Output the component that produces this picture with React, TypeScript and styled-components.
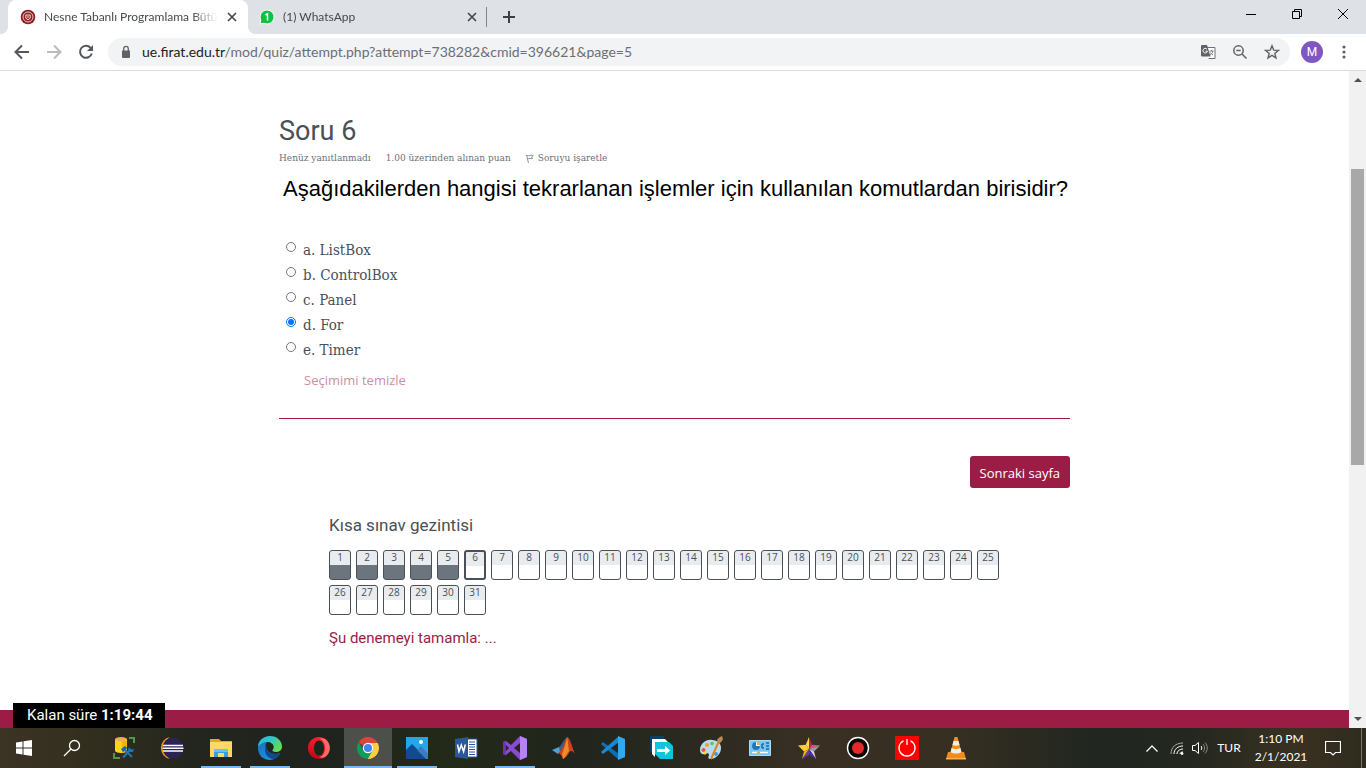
import React, { useState } from 'react';
import styled, { createGlobalStyle } from 'styled-components';

const ui = `"Open Sans", "Noto Sans", sans-serif`;
const slab = `"DejaVu Serif Condensed", "DejaVu Serif", "Liberation Serif", serif`;
const roboto = `Roboto, "Liberation Sans", sans-serif`;
const lato = `Lato, "Open Sans", sans-serif`;
const maroon = '#9b1d46';

const Global = createGlobalStyle`
  *, *::before, *::after { box-sizing: border-box; }
  body { margin: 0; background: #fff; }
  button { border: 0; padding: 0; background: none; font: inherit; color: inherit; cursor: pointer; }
  svg { display: block; flex: none; }
`;

const Screen = styled.div`
  display: flex;
  flex-direction: column;
  min-height: 100vh;
`;

/* ---------- browser chrome ---------- */

const TabStrip = styled.header`
  display: flex;
  height: 34px;
  padding-left: 8px;
  background: #dee1e6;
  font: 12px/16px ${lato};
  color: #45494d;
`;

const Tab = styled.div<{ $active?: boolean }>`
  position: relative;
  display: flex;
  align-items: center;
  gap: 8px;
  width: 240px;
  padding: 0 10px 0 ${(p) => (p.$active ? 12 : 11)}px;
  border-radius: 8px 8px 0 0;
  background: ${(p) => (p.$active ? '#fff' : 'transparent')};
  &::before, &::after {
    content: '';
    display: ${(p) => (p.$active ? 'block' : 'none')};
    position: absolute;
    bottom: 0;
    width: 8px;
    height: 8px;
  }
  &::before { left: -8px; background: radial-gradient(circle at 0 0, transparent 8px, #fff 8px); }
  &::after { right: -8px; background: radial-gradient(circle at 100% 0, transparent 8px, #fff 8px); }
`;

const TabTitle = styled.span`
  flex: 1;
  white-space: nowrap;
  mask-image: linear-gradient(to right, #000 85%, transparent);
`;

const TabDivider = styled.i`
  align-self: center;
  width: 1px;
  height: 20px;
  margin-left: -2px;
  background: #80868b;
`;

const NewTab = styled.button`
  display: grid;
  place-items: center;
  width: 28px;
  margin-left: 8px;
`;

const WindowButtons = styled.div`
  display: flex;
  margin-left: auto;
`;

const WindowButton = styled.button`
  display: grid;
  place-items: center;
  width: 46px;
  height: 28px;
`;

const Toolbar = styled.nav`
  display: flex;
  align-items: center;
  height: 37px;
  padding: 0 6px;
  border-bottom: 1px solid #dadce0;
  background: #fff;
`;

const ToolButton = styled.button`
  display: grid;
  place-items: center;
  width: 32px;
  height: 28px;
`;

const Omnibox = styled.div`
  flex: 1;
  display: flex;
  align-items: center;
  height: 28px;
  margin: 0 6px;
  padding: 0 2px 0 12px;
  border-radius: 14px;
  background: #f1f3f4;
`;

const Address = styled.a`
  flex: 1;
  margin-left: 10px;
  overflow: hidden;
  white-space: nowrap;
  font: 14px/20px ${lato};
  color: #6b6f74;
  text-decoration: none;
  b { font-weight: 400; color: #202124; }
`;

const Avatar = styled.button`
  && {
    width: 22px;
    height: 22px;
    margin: 0 5px;
    border-radius: 50%;
    background: #7e57c2;
    color: #fff;
    font: 12px/22px ${roboto};
  }
`;

/* ---------- page ---------- */

const Viewport = styled.div`
  position: relative;
  flex: 1;
  display: flex;
`;

const Page = styled.div`
  flex: 1;
  display: flex;
  flex-direction: column;
  background: #fff;
`;

const Main = styled.main`
  flex: 1;
  width: 100%;
  max-width: 791px;
  margin: 0 auto;
  padding: 44px 0 32px;
`;

const Title = styled.h1`
  margin: 0;
  font: 400 27px/32px ${roboto};
  color: #495057;
`;

const Meta = styled.div`
  display: flex;
  gap: 15px;
  margin-top: 3px;
  font: 10px/16px ${slab};
  color: #6a737b;
`;

const FlagLink = styled.a`
  display: flex;
  align-items: center;
  gap: 4px;
  color: inherit;
  text-decoration: none;
`;

const Question = styled.p`
  margin: 9px 0 35px;
  padding-left: 4px;
  font: 22px/28px "Liberation Sans", Arial, sans-serif;
  color: #000;
`;

const Answers = styled.form`
  display: flex;
  flex-direction: column;
  padding-left: 7px;
`;

const Answer = styled.label`
  display: flex;
  align-items: flex-start;
  gap: 7px;
  font: 15px/25px ${slab};
  color: #495057;
  input { width: 10px; height: 10px; margin: 4px 0 0; }
`;

const ClearLink = styled.a`
  align-self: flex-start;
  margin: 5px 0 0 18px;
  font: 13px/24px ${ui};
  color: #cd8ea3;
  text-decoration: none;
`;

const Divider = styled.hr`
  height: 1px;
  margin: 26px 0 37px;
  border: 0;
  background: ${maroon};
`;

const Submit = styled.div`
  display: flex;
  justify-content: flex-end;
`;

const NextButton = styled.button`
  && {
    height: 32px;
    padding: 2px 10px 0;
    border-radius: 3px;
    background: ${maroon};
    color: #fff;
    font: 13px/20px ${ui};
  }
`;

const QuizNav = styled.section`
  padding: 25px 50px 0;
`;

const NavTitle = styled.h2`
  margin: 0 0 13px;
  font: 400 17px/24px ${roboto};
  color: #495057;
`;

const NavGrid = styled.div`
  display: flex;
  flex-wrap: wrap;
  gap: 5px;
`;

const NavCell = styled.a<{ $answered: boolean; $current: boolean }>`
  width: 22px;
  height: 30px;
  border: ${(p) => (p.$current ? 2 : 1)}px solid #495057;
  border-radius: 3px;
  background: linear-gradient(#e9ecef 14px, ${(p) => (p.$answered ? '#6c757d' : '#fff')} 14px);
  font: 10px/${(p) => (p.$current ? 11 : 13)}px ${ui};
  color: #495057;
  text-align: center;
  text-decoration: none;
`;

const FinishLink = styled.a`
  display: inline-block;
  margin-top: 13px;
  font: 15px/20px ${roboto};
  color: ${maroon};
  text-decoration: none;
`;

const PageFooter = styled.footer`
  height: 18px;
  background: ${maroon};
`;

const Timer = styled.div`
  position: absolute;
  left: 13px;
  bottom: 0;
  padding: 0 12px 0 14px;
  background: #000;
  color: #fff;
  font: 15px/25px ${roboto};
`;

const ScrollTrack = styled.div`
  display: flex;
  flex-direction: column;
  align-items: center;
  justify-content: space-between;
  width: 17px;
  padding: 7px 0;
  background: #f1f1f1;
`;

const ScrollBody = styled.div`
  flex: 1;
  width: 13px;
  padding: 87px 0 0;
`;

const ScrollThumb = styled.div`
  height: 296px;
  background: #a8a8a8;
`;

/* ---------- taskbar ---------- */

const Taskbar = styled.footer`
  display: flex;
  height: 40px;
  background: linear-gradient(90deg, #3b3324 0, #35301f 5%, #23261e 14%, #1f231e 24%, #232a19 33%, #21251d 42%, #2a291f 50%, #393023 60%, #352f22 70%, #212620 80%, #232720 87%, #393121 95%, #2e2b1e 100%);
  color: #fff;
  font: 12px/18px ${lato};
`;

const TaskButton = styled.button<{ $state?: 'open' | 'active' }>`
  display: flex;
  flex-direction: column;
  align-items: center;
  width: 48px;
  height: 40px;
  && {
    padding-top: 8px;
    background: ${(p) => (p.$state === 'active' ? '#4d504a' : 'none')};
  }
  &::after {
    content: '';
    width: ${(p) => (p.$state === 'active' ? 48 : 40)}px;
    height: 2px;
    margin-top: auto;
    background: ${(p) => (p.$state ? '#76b9ed' : 'transparent')};
  }
`;

const Apps = styled.div`
  display: flex;
  gap: 1px;
  margin-left: 3px;
`;

const Tray = styled.div`
  display: flex;
  align-items: center;
  margin-left: auto;
`;

const TrayButton = styled.button<{ $w: number }>`
  display: grid;
  place-items: center;
  width: ${(p) => p.$w}px;
  height: 40px;
`;

const Clock = styled.time`
  width: 62px;
  margin: 0 1px 0 3px;
  text-align: center;
  white-space: nowrap;
  span { display: block; }
`;

const ShowDesktop = styled.button`
  width: 5px;
  height: 40px;
  margin-left: 8px;
  && { border-left: 1px solid #77746b; }
`;

const CloseIcon = () => (
  <svg width="12" height="12" viewBox="0 0 12 12"><path d="M2 2l8 8M10 2l-8 8" stroke="#45494d" strokeWidth="1.7" /></svg>
);

const I = ({ children }: { children: React.ReactNode }) => (
  <svg width="24" height="24" viewBox="0 0 24 24" fill="none">{children}</svg>
);

const apps: { name: string; state?: 'open' | 'active'; icon: React.ReactNode }[] = [
  { name: 'SQL Server Management Studio', icon: <I>
    <path d="M18 2h5v5M3 17v5h6" stroke="#4f9b45" strokeWidth="2" />
    <path d="M4 3v12c1 2.500 11 2.500 12 0V3z" fill="#ffd21c" /><path d="M11 5h5v10c-1 1-3 2-5 1.900z" fill="#f0b400" />
    <ellipse cx="10" cy="3.200" rx="6" ry="2.200" fill="#f5a95a" />
    <path d="M13 13l8 8M20 13l-8 8.500" stroke="#1878bd" strokeWidth="2" /><path d="M10 13l4-3 2 2-4 4z" fill="#1265a5" /><path d="M18 11l1 3 4-1-1 3h-4l-1-3z" fill="#1878bd" /></I> },
  { name: 'Eclipse', icon: <I>
    <path d="M10 1A11.200 11.200 0 0 0 10 23 13 13 0 0 1 10 1z" fill="#f7941e" />
    <circle cx="13" cy="12" r="10.500" fill="#2c2255" />
    <path d="M3 9.500h20M2.500 12.200h21M3 15h20" stroke="#fff" strokeWidth="1.500" /></I> },
  { name: 'File Explorer', state: 'open', icon: <I>
    <path d="M1 3h9l2 2h11v16H1z" fill="#e8a61c" /><path d="M1 6h22v15H1z" fill="#ffd867" />
    <path d="M5 21v-7l1-1h12l1 1v7h-4v-4H9v4z" fill="#3b9be4" /><path d="M5 14l1-1h12l1 1v2H5z" fill="#71bdf1" /></I> },
  { name: 'Microsoft Edge', state: 'open', icon: <I>
    <defs>
      <linearGradient id="eg" x1="0" y1="0" x2="1" y2="0.600"><stop stopColor="#2ab5e8" /><stop offset="0.500" stopColor="#30c6c6" /><stop offset="1" stopColor="#65dc50" /></linearGradient>
      <linearGradient id="eb" x1="0" y1="0" x2="0.600" y2="1"><stop stopColor="#1b6fc4" /><stop offset="1" stopColor="#1795dc" /></linearGradient>
    </defs>
    <path d="M0 12C1 6 6 5 9 6c-2 2-2 5 0 8 3 4 8 5 13 3-2 4-6 7-10 7C5 24 0 19 0 12z" fill="url(#eb)" />
    <path d="M8 9c-3 7 1 14 8 14 3-1 5-3 6-6-5 2-11 1-13-4-.6-1.500-.7-3-1-4z" fill="#104a8e" />
    <path d="M0 11C0 5 5 0 12 0s12 5 12 10.500c0 4-3 5.500-6 5.500-3 0-4-1.200-3.500-2 .5-.7 1.200-1.500 1.200-3 0-3-3-5-6.700-5C5 6 2 8 0 11z" fill="url(#eg)" />
    </I> },
  { name: 'Opera', icon: <I>
    <defs><linearGradient id="op" x1="0" y1="0" x2="0" y2="1"><stop stopColor="#ff1b2d" /><stop offset="1" stopColor="#b50c16" /></linearGradient></defs>
    <path fillRule="evenodd" d="M12 1C5.500 1 1 6 1 12s4.500 11 11 11 11-5 11-11S18.500 1 12 1zm0 3.500c3 0 5 3.500 5 7.500s-2 7.500-5 7.500S7 16 7 12s2-7.500 5-7.500z" fill="url(#op)" />
    <path d="M12 3c1.500-1 4-1.500 7 .7C24 8 24 16 19 20.300c-3 2.200-5.500 1.700-7 .7 3 0 6-4 6-9s-3-9-6-9z" fill="#fb6a68" /></I> },
  { name: 'Google Chrome', state: 'active', icon: <I>
    <path d="M12 12L2.500 6.500A11 11 0 0 1 21.500 6.500z" fill="#db4437" />
    <path d="M12 12V7h9.800A11 11 0 0 1 11.500 23l5-8.500z" fill="#ffcd40" />
    <path d="M12 12l4.400 2.500-4.900 8.500A11 11 0 0 1 2.500 6.500l5 8z" fill="#0f9d58" />
    <circle cx="12" cy="12" r="5.200" fill="#fff" /><circle cx="12" cy="12" r="4.100" fill="#4285f4" /></I> },
  { name: 'Photos', state: 'open', icon: <I>
    <path d="M1 1h22v22H1z" fill="#24a7e8" /><path d="M10 17l7-7 6 6v7H10z" fill="#568fdd" />
    <path d="M1 14l6-6 15 15H1z" fill="#12498f" /><path d="M12 14l4-4 7 8v5h-2z" fill="#3e78c6" /><circle cx="16" cy="6" r="2" fill="#fff" /></I> },
  { name: 'Word', icon: <I>
    <path d="M12 3h11v18H12z" fill="#fff" stroke="#2b579a" /><path d="M15 6h6M15 8.500h6M15 11h6M15 13.500h6M15 16h6M15 18.500h6" stroke="#2b579a" strokeWidth="1.200" />
    <path d="M1 3l13-2v22L1 21z" fill="#2b579a" /><path d="M3.500 8.500l1.500 7 2.300-6.500 2.300 6.500 1.700-7" stroke="#fff" strokeWidth="1.500" /></I> },
  { name: 'Visual Studio', state: 'open', icon: <I>
    <path fillRule="evenodd" d="M0 6l2.500-1.200L8 9l9-9 7 3v18l-7 3-9-9-5.500 4.200L0 18zm2.500 2.500v7L6 12zM17 7l-6 5 6 5z" fill="#8a4bd0" />
    <path d="M17 0l7 3v18l-7 3z" fill="#b583f5" /><path d="M0 6l2.500-1.200v14.400L0 18z" fill="#6f35ad" /></I> },
  { name: 'MATLAB', icon: <I>
    <path d="M0 14l7-3 4 2-5 5z" fill="#4ba4d8" /><path d="M7 11c2-1 3-5 8-10l-4 12-3 3z" fill="#365c8f" />
    <path d="M6 17c3 0 5 6 5 6 5-2 6-8 8-8 2-.5 4 3 4 3-3-7-5-17-8-17-3 6-4 12-9 16z" fill="#c9431f" />
    <path d="M15 1c-1 6-3 12-5 17l1 5c3-2 4-6 6-8-1-6-1-10-2-14z" fill="#f38b24" /></I> },
  { name: 'Visual Studio Code', icon: <I>
    <path d="M0 8l2-2 16 12v6L1 9z" fill="#0a70b8" /><path d="M0 16l2 2L18 6V0L1 15z" fill="#1689d2" />
    <path d="M17 0l7 3v18l-7 3z" fill="#34a8ee" /></I> },
  { name: 'Screen Share', icon: <I>
    <path d="M0 0h14v4H3v13L0 15z" fill="#094266" /><path d="M2 3h13l3 3v6H5v9l-3-3z" fill="#fff" />
    <path d="M5 6h14l4 4v13H10l-5-5z" fill="#10c4de" /><path d="M7 13h8v-3l5 4.500-5 4.500v-3H7z" fill="#fff" /></I> },
  { name: 'Paint', icon: <I>
    <path d="M1 14C1 8 7 3 13 4c6 0 9 4 9 8 0 6-5 11-11 11-2 0-2-2-1-4 0-2-2-2-4-1-3 1-5-1-5-4z" fill="#b9dced" />
    <circle cx="4.500" cy="14" r="2" fill="#e6573f" /><circle cx="8" cy="9" r="2" fill="#f09d37" /><circle cx="13" cy="7.500" r="1.800" fill="#6ebe46" /><circle cx="6" cy="17" r="1.500" fill="#f6d545" /><circle cx="17" cy="18" r="2" fill="#4d95d8" />
    <path d="M12 23l8-18" stroke="#d98528" strokeWidth="2" /><path d="M18 5c0-2 2-4 5-5l1 3c-1 2-2 4-4 4z" fill="#b98a5a" /></I> },
  { name: 'Control Panel', icon: <I>
    <path d="M1.500 4.500h21v15h-21z" fill="#77c6f2" stroke="#a7dcf7" /><circle cx="8" cy="10" r="3.800" fill="#fff" /><path d="M8 10V6a4 4 0 1 0 4 4z" fill="#1f76bd" /><path d="M9 5.500V9h3.500" fill="#f5a623" />
    <path d="M14 8h2M14 12h2M18 7h3M18 10h3M18 13h3M14 8v4" stroke="#1769aa" strokeWidth="1.500" /><path d="M4 16.500h16" stroke="#fff" strokeWidth="1.500" /><path d="M9 16.500h3" stroke="#f5a623" strokeWidth="2" /></I> },
  { name: 'StarUML', icon: <I>
    <path d="M12 1L8.800 8.800 12 13z" fill="#ffd84e" /><path d="M12 1l3.200 7.800L12 13z" fill="#a82c48" /><path d="M1 9.500l7.800-.7L12 13l-5 2.500z" fill="#ffcf33" />
    <path d="M23 9.500l-7.800-.7L12 13z" fill="#e35176" /><path d="M23 9.500l-6 6L12 13z" fill="#9a9aa4" /><path d="M17 15.500l2 7.500-7-10z" fill="#d3d3da" />
    <path d="M12 13v6l7 4z" fill="#4b2ba0" /><path d="M12 13v6l-7 4z" fill="#5d3bb8" /><path d="M7 15.500L5 23l7-10z" fill="#eab11e" /></I> },
  { name: 'Screen Recorder', icon: <I>
    <circle cx="12" cy="12" r="10.500" fill="#080808" stroke="#fff" strokeWidth="1.400" /><circle cx="12" cy="12" r="6" fill="#e32a2a" /></I> },
  { name: 'Shutdown', icon: <I>
    <path d="M0 0h24v24H0z" fill="#f00" /><path d="M8.500 4.800a8 8 0 1 0 7 0M12 3v6" stroke="#fff" strokeWidth="1.300" /></I> },
  { name: 'VLC', icon: <I>
    <path d="M4 16h16l2 7H2z" fill="#f08a1c" /><path d="M10.500 1h3L18 18c-2 2-10 2-12 0z" fill="#f28c1a" />
    <path d="M9.500 5h5l1 4c-2 1-5 1-7 0zM7.600 12c2.500 1.500 6.300 1.500 8.800 0l1 4c-3 2-8 2-10.800 0z" fill="#eee" /><path d="M2 22h20v1.500H2z" fill="#ffb347" /></I> },
];

const options = ['a. ListBox', 'b. ControlBox', 'c. Panel', 'd. For', 'e. Timer'];

export default function App() {
  const [choice, setChoice] = useState(3);
  return (
    <Screen>
      <Global />
      <TabStrip>
        <Tab $active>
          <svg width="16" height="16" viewBox="0 0 16 16" fill="none">
            <circle cx="8" cy="8" r="7.300" fill="#8b2023" /><circle cx="8" cy="8" r="5" stroke="#e8c7c7" />
            <path d="M5.800 6h4.400v3.200L8 10.800 5.800 9.200z" stroke="#f4dede" /><circle cx="8" cy="8" r="0.800" fill="#fff" />
          </svg>
          <TabTitle>Nesne Tabanlı Programlama Bütü</TabTitle>
          <button aria-label="Close tab"><CloseIcon /></button>
        </Tab>
        <Tab>
          <svg width="16" height="16" viewBox="0 0 16 16" fill="none">
            <path d="M8 1a7 7 0 1 1-3 13.300L1 15l.8-4A7 7 0 0 1 8 1z" fill="#0dc143" stroke="#fff" />
            <path d="M6.500 6L8.500 4.800V11.500" stroke="#fff" strokeWidth="1.500" />
          </svg>
          <TabTitle>(1) WhatsApp</TabTitle>
          <button aria-label="Close tab"><CloseIcon /></button>
        </Tab>
        <TabDivider />
        <NewTab aria-label="New tab">
          <svg width="12" height="12" viewBox="0 0 12 12"><path d="M6 0v12M0 6h12" stroke="#3c4043" strokeWidth="2" /></svg>
        </NewTab>
        <WindowButtons>
          <WindowButton aria-label="Minimize"><svg width="10" height="10"><path d="M0 5.500h10" stroke="#000" /></svg></WindowButton>
          <WindowButton aria-label="Restore"><svg width="10" height="10" fill="none" stroke="#000"><path d="M.5 2.500h7v7h-7zM2.500 2.500v-2h7v7h-2" /></svg></WindowButton>
          <WindowButton aria-label="Close"><svg width="10" height="10"><path d="M0 0l10 10M10 0L0 10" stroke="#000" /></svg></WindowButton>
        </WindowButtons>
      </TabStrip>
      <Toolbar>
        <ToolButton aria-label="Back"><svg width="16" height="16" viewBox="0 0 16 16" fill="none" stroke="#54585d" strokeWidth="2"><path d="M15 8H2M8 1.500L1.500 8 8 14.500" /></svg></ToolButton>
        <ToolButton aria-label="Forward"><svg width="16" height="16" viewBox="0 0 16 16" fill="none" stroke="#b9bbbe" strokeWidth="2"><path d="M1 8h13M8 1.500L14.500 8 8 14.500" /></svg></ToolButton>
        <ToolButton aria-label="Reload"><svg width="16" height="16" viewBox="0 0 16 16"><path d="M12.600 3.800A6 6 0 1 0 13.800 9.500" fill="none" stroke="#54585d" strokeWidth="2" /><path d="M15 1v6H9z" fill="#54585d" /></svg></ToolButton>
        <Omnibox>
          <svg width="12" height="14" viewBox="0 0 12 14"><path d="M2 5.500h8V12a1 1 0 0 1-1 1H3a1 1 0 0 1-1-1z" fill="#5f6368" /><path d="M3.700 6V3.700a2.300 2.300 0 0 1 4.600 0V6" fill="none" stroke="#5f6368" strokeWidth="1.300" /></svg>
          <Address href="#"><b>ue.firat.edu.tr</b>/mod/quiz/attempt.php?attempt=738282&amp;cmid=396621&amp;page=5</Address>
          <ToolButton aria-label="Translate"><svg width="16" height="16" viewBox="0 0 16 16" fill="none">
            <path d="M7 3.500h8v11H8.500" fill="#fff" stroke="#6d7175" /><path d="M2 1h5l3.500 11.500H2a1 1 0 0 1-1-1V2a1 1 0 0 1 1-1z" fill="#5f6368" />
            <path d="M7 5.200a2.300 2.300 0 1 0 .5 2H5.500" stroke="#fff" /><path d="M9.500 7h4M11.500 6v1M13 7c-.5 2-1.500 3-3 4M10.500 8.500c.5 1 1.500 2 2.500 2.500" stroke="#6d7175" strokeWidth="0.900" /></svg></ToolButton>
          <ToolButton aria-label="Zoom"><svg width="16" height="16" viewBox="0 0 16 16" fill="none" stroke="#5f6368" strokeWidth="1.500"><circle cx="6.500" cy="6.500" r="4.700" /><path d="M10 10l4.500 4.500M4.300 6.500h4.400" /></svg></ToolButton>
          <ToolButton aria-label="Bookmark"><svg width="16" height="16" viewBox="0 0 16 16" fill="none" stroke="#5f6368" strokeWidth="1.400"><path d="M8 1.800l1.700 4.300 4.700.3-3.600 3 1.200 4.500L8 11.400l-4 2.500 1.200-4.500-3.600-3 4.700-.3z" /></svg></ToolButton>
        </Omnibox>
        <Avatar>M</Avatar>
        <ToolButton aria-label="Menu"><svg width="4" height="14" fill="#5f6368"><circle cx="2" cy="2" r="1.600" /><circle cx="2" cy="7" r="1.600" /><circle cx="2" cy="12" r="1.600" /></svg></ToolButton>
      </Toolbar>

      <Viewport>
        <Page>
          <Main>
            <Title>Soru 6</Title>
            <Meta>
              <span>Henüz yanıtlanmadı</span>
              <span>1.00 üzerinden alınan puan</span>
              <FlagLink href="#">
                <svg width="8" height="9" viewBox="0 0 8 9" fill="none" stroke="#8a9198"><path d="M.5 1l2 8M.8 1.500c2 1 4-1 6.500 0L5.500 3l1 1.500c-2-.5-3 .5-5 0" /></svg>
                Soruyu işaretle
              </FlagLink>
            </Meta>
            <Question>Aşağıdakilerden hangisi tekrarlanan işlemler için kullanılan komutlardan birisidir?</Question>
            <Answers>
              {options.map((text, i) => (
                <Answer key={text}>
                  <input type="radio" name="answer" checked={choice === i} onChange={() => setChoice(i)} />
                  {text}
                </Answer>
              ))}
              <ClearLink href="#">Seçimimi temizle</ClearLink>
            </Answers>
            <Divider />
            <Submit><NextButton type="button">Sonraki sayfa</NextButton></Submit>
            <QuizNav>
              <NavTitle>Kısa sınav gezintisi</NavTitle>
              <NavGrid>
                {Array.from({ length: 31 }, (_, i) => (
                  <NavCell key={i} href="#" $answered={i < 5} $current={i === 5}>{i + 1}</NavCell>
                ))}
              </NavGrid>
              <FinishLink href="#">Şu denemeyi tamamla: ...</FinishLink>
            </QuizNav>
          </Main>
          <PageFooter />
        </Page>
        <ScrollTrack>
          <svg width="8" height="4"><path d="M0 4l4-4 4 4z" fill="#505050" /></svg>
          <ScrollBody><ScrollThumb /></ScrollBody>
          <svg width="8" height="4"><path d="M0 0l4 4 4-4z" fill="#505050" /></svg>
        </ScrollTrack>
        <Timer>Kalan süre <b>1:19:44</b></Timer>
      </Viewport>

      <Taskbar>
        <TaskButton aria-label="Start"><I><path d="M4 6.500l6.500-1v6H4zM11.500 5.300L20 4v7.500h-8.500zM4 12.500h6.500v6L4 17.600zM11.500 12.500H20V20l-8.500-1.300z" fill="#fff" /></I></TaskButton>
        <TaskButton aria-label="Search"><I><circle cx="14.500" cy="9.500" r="5" stroke="#fff" strokeWidth="1.300" /><path d="M11 13l-7 7" stroke="#fff" strokeWidth="1.300" /></I></TaskButton>
        <Apps>
          {apps.map((a) => <TaskButton key={a.name} aria-label={a.name} $state={a.state}>{a.icon}</TaskButton>)}
        </Apps>
        <Tray>
          <TrayButton $w={26} aria-label="Hidden icons"><svg width="12" height="7" fill="none" stroke="#fff" strokeWidth="1.300"><path d="M.5 6.500L6 1l5.500 5.500" /></svg></TrayButton>
          <TrayButton $w={24} aria-label="Network"><svg width="14" height="14" viewBox="0 0 14 14" fill="none" stroke="#fff"><path d="M1 13C1 6 6 2 13 2" stroke="#aaa" /><path d="M4 13c0-5 4-8 9-8M7 13c0-3 3-5 6-5M10 13c0-1.500 1.500-2 3-2" /><circle cx="12" cy="12.500" r="1" fill="#fff" /></svg></TrayButton>
          <TrayButton $w={22} aria-label="Volume"><svg width="17" height="14" viewBox="0 0 17 14" fill="none" stroke="#fff"><path d="M.5 4.500h2.500l3.500-3v11l-3.500-3H.5zM9 5c1 1 1 3 0 4" /><path d="M11 3c2 2 2 6 0 8M13 1.500c3 3 3 8 0 11" stroke="#8c8c86" /></svg></TrayButton>
          <TrayButton $w={36}>TUR</TrayButton>
          <Clock><span>1:10 PM</span><span>2/1/2021</span></Clock>
          <TrayButton $w={40} aria-label="Notifications"><svg width="16" height="16" fill="none" stroke="#fff" strokeWidth="1.200"><path d="M.5 1.500h15v11H10.500L8 15l-2.500-2.500H.5z" /></svg></TrayButton>
          <ShowDesktop aria-label="Show desktop" />
        </Tray>
      </Taskbar>
    </Screen>
  );
}
